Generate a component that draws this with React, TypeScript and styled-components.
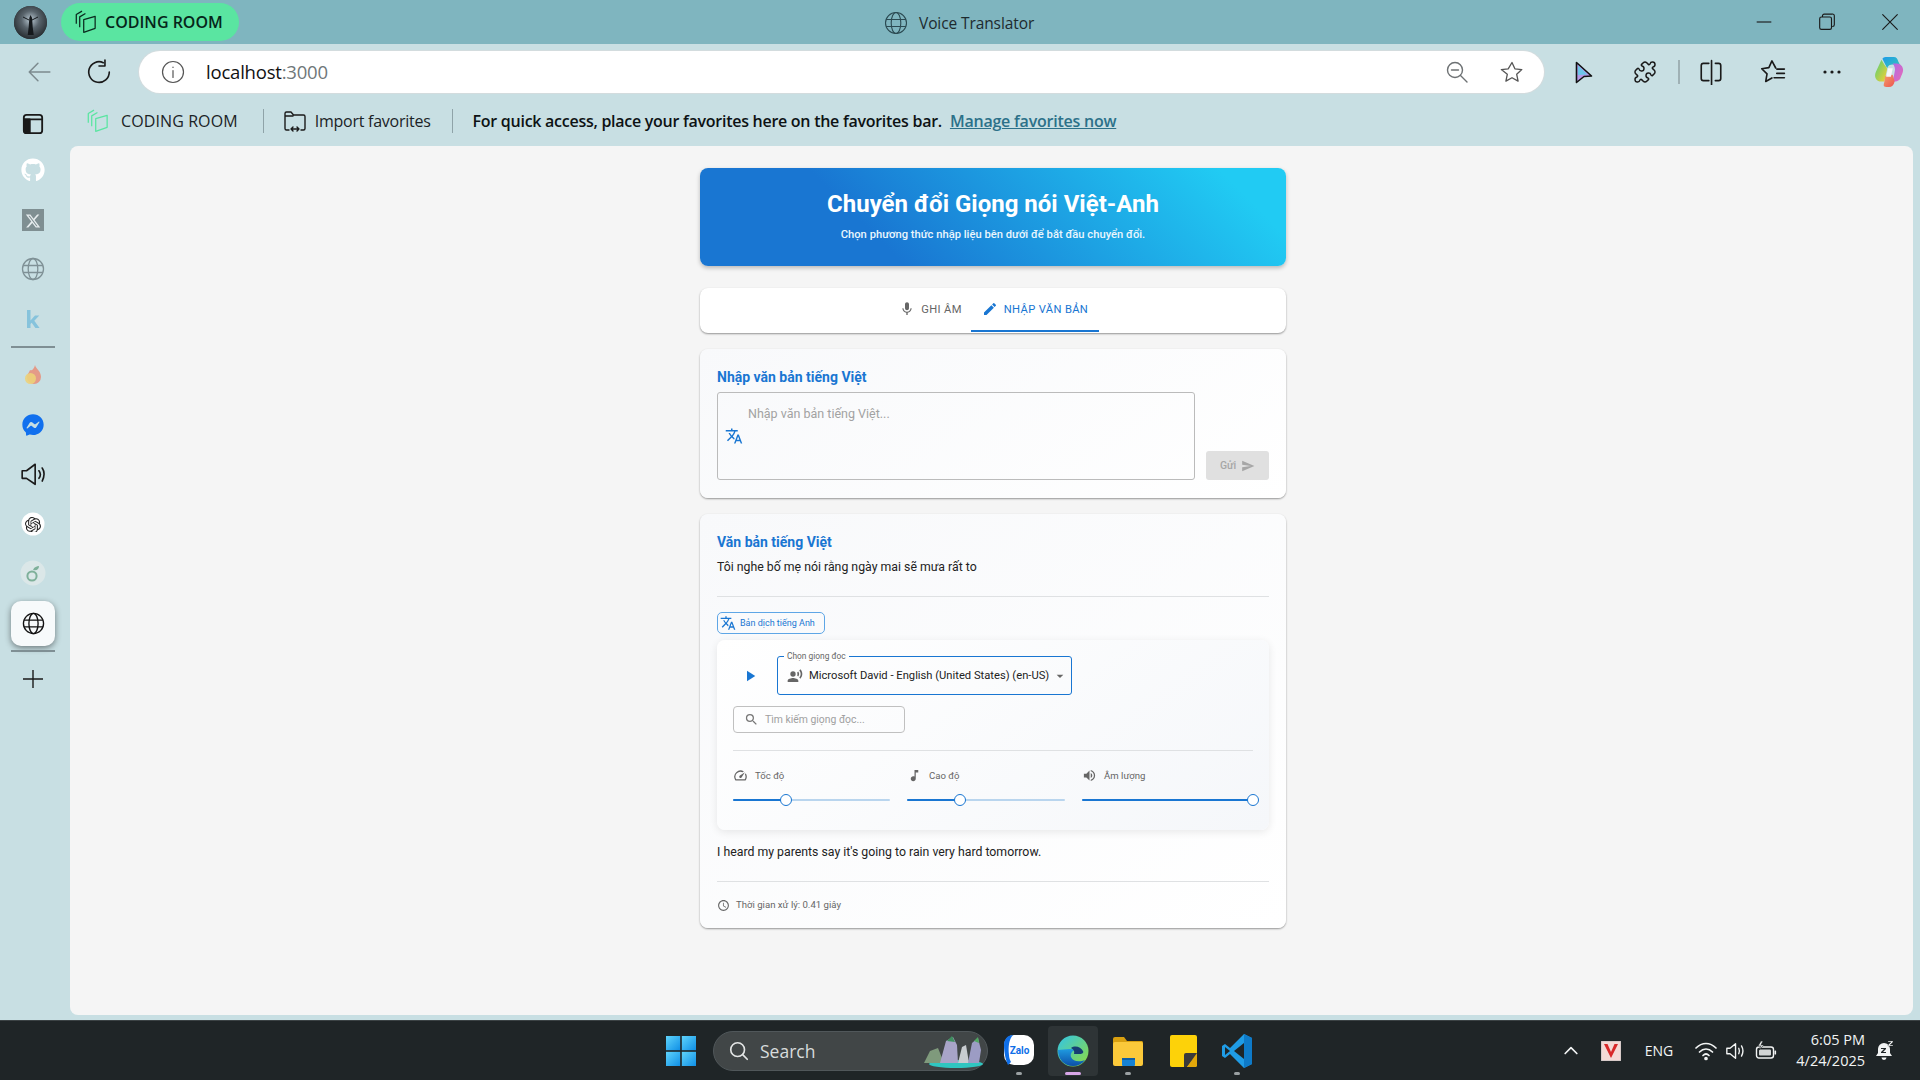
import React from "react";
import styled, { createGlobalStyle } from "styled-components";
import {
  MdMic, MdEdit, MdTranslate, MdSend, MdPlayArrow, MdRecordVoiceOver, MdSearch,
  MdOutlineSpeed, MdMusicNote, MdVolumeUp, MdAccessTime, MdArrowDropDown,
} from "react-icons/md";
import { FaGithub, FaFacebookMessenger } from "react-icons/fa";
import { SiOpenai } from "react-icons/si";
import { FaXTwitter } from "react-icons/fa6";
import { Puzzle } from "lucide-react";

const Global = createGlobalStyle`
  html, body { margin: 0; padding: 0; background: #c8dfe3; }
  * { box-sizing: border-box; }
  body { font-family: "Open Sans", "Noto Sans", sans-serif; }
`;

const Screen = styled.div`
  width: 1920px; height: 1080px; overflow: hidden;
  display: flex; flex-direction: column; background: #c8dfe3; color: #111;
`;

/* ---------- title bar ---------- */
const TitleBar = styled.div`
  height: 44px; background: #7fb5bf; display: flex; align-items: center;
  position: relative; padding-left: 14px;
`;
const Avatar = styled.div`
  width: 33px; height: 33px; border-radius: 50%; overflow: hidden; flex: none; background: #3a4146;
`;
const ProfilePill = styled.div`
  margin-left: 14px; width: 178px; height: 38px; border-radius: 19px; background: #5ae5a1;
  display: flex; align-items: center; gap: 7px; padding-left: 13px;
  font-size: 16px; font-weight: 600; color: #06261a;
`;
const WindowTitle = styled.div`
  position: absolute; left: 884px; top: 1px; height: 44px; display: flex; align-items: center; gap: 11px;
  font-size: 15.5px; color: #1d2a2e; letter-spacing: -0.1px;
`;
const WindowControls = styled.div`
  margin-left: auto; margin-right: -1px; display: flex; height: 44px;
`;
const WinSlot = styled.div`
  width: 63px; height: 44px; display: flex; align-items: center; justify-content: center;
`;

/* ---------- toolbar ---------- */
const Toolbar = styled.div`
  height: 56px; display: flex; align-items: center; padding-left: 9px;
`;
const ToolSlot = styled.div<{ $w: number }>`
  width: ${(p) => p.$w}px; height: 42px; flex: none; display: flex; align-items: center; justify-content: center;
`;
const AddressBar = styled.div`
  width: 1405px; margin: 0 10px; height: 42px; flex: none; background: #fff; border-radius: 21px;
  box-shadow: 0 0 0 1px #d3dcde; display: flex; align-items: center; padding: 0 20px 0 22px;
`;
const Url = styled.div`
  margin-left: 21px; margin-top: -2px; flex: 1; font-size: 18.5px; color: #111; letter-spacing: -0.2px;
  span { color: #6f7779; }
`;
const AddressAction = styled.div<{ $gap?: number }>`
  width: 24px; height: 24px; margin-left: ${(p) => p.$gap ?? 0}px; display: flex; align-items: center; justify-content: center;
`;
const ToolSep = styled.div`
  width: 2px; height: 24px; background: #9fb1b5; margin: 0 2px; flex: none;
`;

/* ---------- body ---------- */
const Body = styled.div`
  height: 920px; display: flex;
`;
const Sidebar = styled.div`
  width: 70px; flex: none; padding-top: 2px; padding-right: 4px; display: flex; flex-direction: column; align-items: center;
`;
const SideItem = styled.div<{ $h?: number; $mb?: number; $active?: boolean }>`
  width: 44px; height: ${(p) => p.$h ?? 50}px; margin-bottom: ${(p) => p.$mb ?? 0}px; flex: none;
  display: flex; align-items: center; justify-content: center;
  ${(p) => p.$active ? `background: #f7fafb; border-radius: 10px; box-shadow: 0 2px 6px rgba(0,0,0,.45);` : ""}
`;
const SideSep = styled.div<{ $mt: number; $mb: number }>`
  width: 44px; height: 2px; background: #7f8f94; flex: none;
  margin: ${(p) => p.$mt}px 0 ${(p) => p.$mb}px;
`;
const RightCol = styled.div`
  flex: 1; display: flex; flex-direction: column; min-width: 0; padding-right: 7px; padding-bottom: 5px;
`;
const FavBar = styled.div`
  height: 46px; flex: none; display: flex; align-items: center; font-size: 16px; color: #1b2326; padding-bottom: 4px;
`;
const FavItem = styled.div<{ $ml: number; $gap: number; $ls: number }>`
  display: flex; align-items: center; margin-left: ${(p) => p.$ml}px; gap: ${(p) => p.$gap}px; letter-spacing: ${(p) => p.$ls}px;
`;
const FavSep = styled.div<{ $ml: number }>`
  width: 1px; height: 24px; background: #8fa3a8; margin-left: ${(p) => p.$ml}px;
`;
const FavHint = styled.div`
  margin-left: 20px; font-weight: 600; color: #0d1214; letter-spacing: -0.27px;
`;
const FavLink = styled.a`
  margin-left: 8px; color: #2c7189; text-decoration: underline; font-weight: 600; letter-spacing: -0.23px;
`;
const Content = styled.div`
  flex: 1; background: #f5f5f5; border-radius: 8px; padding: 22px 0 0 3px;
  font-family: Roboto, "Noto Sans", sans-serif; display: flex; flex-direction: column; align-items: center;
`;
const Column = styled.div`
  width: 586px; display: flex; flex-direction: column;
`;

/* ---------- app ---------- */
const Hero = styled.div`
  height: 98px; border-radius: 8px; background: linear-gradient(45deg, #1976d2 30%, #21cbf3 90%);
  box-shadow: 0 2px 4px rgba(0,0,0,.25); color: #fff; text-align: center; padding-top: 21px;
`;
const HeroTitle = styled.div`
  font-size: 24px; line-height: 30px; font-weight: 700;
`;
const HeroSub = styled.div`
  margin-top: 8px; font-size: 11.2px; line-height: 15px; font-weight: 500; color: #eaf6fd;
`;
const TabsBar = styled.div`
  margin-top: 22px; height: 45px; background: #fff; border-radius: 8px; display: flex; justify-content: center;
  box-shadow: 0 1px 2px rgba(0,0,0,.4); padding-left: 3px;
`;
const Tab = styled.div<{ $w: number; $active?: boolean }>`
  width: ${(p) => p.$w}px; height: 44px; display: flex; align-items: center; justify-content: center; gap: 6px;
  font-size: 11.2px; font-weight: 400; letter-spacing: .35px; color: ${(p) => (p.$active ? "#1976d2" : "#666")};
  border-bottom: 2px solid ${(p) => (p.$active ? "#1976d2" : "transparent")};
  svg { color: ${(p) => (p.$active ? "#1976d2" : "#666")}; }
`;
const Card = styled.div<{ $mt: number; $h: number }>`
  margin-top: ${(p) => p.$mt}px; height: ${(p) => p.$h}px; border-radius: 8px; padding: 18px 17px 17px;
  background: linear-gradient(145deg, #f8f9fb, #ffffff); box-shadow: 0 1px 2px rgba(0,0,0,.4);
`;
const CardTitle = styled.div`
  font-size: 14px; line-height: 20px; font-weight: 700; color: #1976d2;
`;
const InputRow = styled.div`
  margin-top: 5px; display: flex; align-items: flex-end; gap: 11px;
`;
const TextArea = styled.div`
  width: 478px; height: 88px; border: 1px solid #bbb; border-radius: 3px; position: relative;
  display: flex; align-items: center; padding-left: 7px;
  color: #1976d2;
`;
const Placeholder = styled.div`
  position: absolute; left: 30px; top: 13px; font-size: 12.5px; line-height: 16px; color: #a2a2a2;
`;
const SendButton = styled.div`
  width: 63px; height: 29px; border-radius: 3px; background: #e0e0e0; color: #a6a6a6; font-size: 10.4px; font-weight: 500;
  display: flex; align-items: center; justify-content: center; gap: 5px;
`;
const BodyText = styled.div`
  font-size: 12.3px; line-height: 16px; color: #222;
`;
const SourceText = styled(BodyText)`
  margin-top: 7px;
`;
const Rule = styled.div<{ $mt: number }>`
  height: 1px; background: #dfe1e3; margin-top: ${(p) => p.$mt}px;
`;
const Chip = styled.div`
  margin-top: 15px; width: 108px; height: 22px; border: 1px solid #5ea6e6; border-radius: 5px; color: #1976d2;
  display: flex; align-items: center; gap: 4px; padding-left: 2px; font-size: 9px; line-height: 12px;
`;
const Player = styled.div`
  margin-top: 6px; height: 190px; border-radius: 8px; padding: 16px;
  background: linear-gradient(145deg, #ffffff, #f5f7fa); box-shadow: 0 2px 8px rgba(0,0,0,.09);
`;
const PlayerRow = styled.div`
  display: flex; align-items: center; height: 39px; color: #1976d2;
`;
const PlayBox = styled.div`
  width: 44px; padding-right: 11px; display: flex; justify-content: center;
`;
const SelectBox = styled.div`
  width: 295px; height: 39px; border: 1px solid #1976d2; border-radius: 3px; position: relative;
  display: flex; align-items: center; padding-left: 9px; gap: 6px; color: #222; font-size: 11.2px; white-space: nowrap;
  svg { color: #666; flex: none; }
`;
const SelectLegend = styled.div`
  position: absolute; left: 6px; top: -6px; padding: 0 3px; background: #fefefe; font-size: 8.4px; line-height: 11px; color: #666;
`;
const SelectArrow = styled.div`
  margin-left: -3px; display: flex;
`;
const SearchBox = styled.div`
  margin-top: 11px; width: 172px; height: 27px; border: 1px solid #c0c0c0; border-radius: 4px;
  display: flex; align-items: center; gap: 6px; padding-left: 10px; font-size: 10.4px; color: #a0a0a0;
  svg { color: #777; }
`;
const SliderGrid = styled.div`
  margin-top: 16px; display: grid; grid-template-columns: 157px 158px 171px; column-gap: 17px;
`;
const SliderLabel = styled.div`
  height: 16px; display: flex; align-items: center; gap: 7px; font-size: 9.6px; color: #666;
  svg { color: #666; flex: none; }
`;
const Track = styled.div`
  margin-top: 16px; height: 2px; background: #b9d5ee; border-radius: 1px; position: relative;
`;
const TrackFill = styled.div`
  position: absolute; left: 0; top: 0; height: 2px; background: #1976d2; border-radius: 1px;
`;
const Thumb = styled.div`
  position: absolute; top: -5px; width: 12px; height: 12px; margin-left: -6px; border-radius: 50%;
  background: #fff; border: 1.5px solid #1976d2;
`;
const TranslatedText = styled(BodyText)`
  margin-top: 14px;
`;
const TimeRow = styled.div`
  margin-top: 16px; display: flex; align-items: center; gap: 6px; font-size: 9.6px; line-height: 14px; color: #666;
`;

/* ---------- taskbar ---------- */
const Taskbar = styled.div`
  height: 60px; flex: none; background: #1f2527; border-top: 1px solid #3b4244; display: flex; align-items: center;
  padding-left: 664px; color: #f2f4f4;
`;
const StartSlot = styled.div`
  width: 34px; display: flex; justify-content: center; margin-right: 15px;
`;
const SearchPill = styled.div`
  width: 275px; height: 40px; border-radius: 20px; background: #414647; border: 1px solid #50575a;
  display: flex; align-items: center; padding-left: 14px; gap: 10px; font-size: 17.5px; color: #d8dcdc; position: relative;
`;
const SearchArt = styled.div`
  position: absolute; right: 3px; top: 3px; display: flex;
`;
const TaskApp = styled.div<{ $w: number; $ml: number; $active?: boolean }>`
  width: ${(p) => p.$w}px; margin-left: ${(p) => p.$ml}px; height: 50px; flex: none; display: flex; align-items: center; justify-content: center; position: relative;
  border-radius: 4px; ${(p) => (p.$active ? "background:#2e3436;" : "")}
`;
const RunDot = styled.div<{ $active?: boolean }>`
  position: absolute; bottom: 1px; left: 50%; height: 3px; border-radius: 2px;
  width: ${(p) => (p.$active ? 16 : 6)}px; margin-left: ${(p) => (p.$active ? -8 : -3)}px;
  background: ${(p) => (p.$active ? "#d8a6e8" : "#9aa0a2")};
`;
const Tray = styled.div`
  margin-left: 286px; display: flex; align-items: center; height: 100%;
`;
const TrayItem = styled.div<{ $w: number }>`
  width: ${(p) => p.$w}px; display: flex; justify-content: center; align-items: center; flex: none; font-size: 14px;
`;
const Clock = styled.div`
  width: 80px; text-align: right; font-size: 14.5px; line-height: 20.5px; color: #f2f4f4;
`;

/* ---------- drawn icons ---------- */
const CodingIcon = ({ c, s = 24 }: { c: string; s?: number }) => (
  <svg width={s} height={s} viewBox="3 2 19 21" fill="none" stroke={c} strokeWidth="1.1" strokeLinejoin="round">
    <path d="M4 14V6l5-3" /><path d="M7 17V8l5-3" /><path d="M10.5 21.5V10.5L20.5 7.5v10.5z" />
  </svg>
);
const Globe = ({ s = 24, c = "#1a1a1a", w = 1.4 }: { s?: number; c?: string; w?: number }) => (
  <svg width={s} height={s} viewBox="0 0 24 24" fill="none" stroke={c} strokeWidth={w}>
    <circle cx="12" cy="12" r="10.5" /><ellipse cx="12" cy="12" rx="4.8" ry="10.5" /><path d="M2 8.5h20M2 15.5h20" />
  </svg>
);
const Ico = ({ s = 24, children, vb = "0 0 24 24", c = "#1a1a1a", w = 1.5 }: { s?: number; children: React.ReactNode; vb?: string; c?: string; w?: number }) => (
  <svg width={s} height={s} viewBox={vb} fill="none" stroke={c} strokeWidth={w} strokeLinecap="round" strokeLinejoin="round">{children}</svg>
);

export default function App() {
  return (
    <Screen>
      <Global />
      <TitleBar>
        <Avatar>
          <svg width="33" height="33" viewBox="0 0 33 33">
            <defs><radialGradient id="av" cx="50%" cy="42%" r="60%"><stop offset="0" stopColor="#b9c8d2" /><stop offset=".45" stopColor="#59646c" /><stop offset="1" stopColor="#23292d" /></radialGradient></defs>
            <rect width="33" height="33" fill="url(#av)" />
            <path d="M16.5 9l1.6 3 .6 9 1 8h-6l1-8 .6-9z" fill="#15191c" />
            <path d="M15 14L9 11M18 14l6-3" stroke="#15191c" strokeWidth="1" />
          </svg>
        </Avatar>
        <ProfilePill><CodingIcon c="#0b2b1f" />CODING ROOM</ProfilePill>
        <WindowTitle><Globe s={24} c="#2b4a52" w={1.1} />Voice Translator</WindowTitle>
        <WindowControls>
          <WinSlot><Ico s={18} vb="0 0 16 16" w={1}><path d="M1.5 8h13" strokeLinecap="butt" /></Ico></WinSlot>
          <WinSlot><Ico s={18} vb="0 0 16 16" w={1}><rect x="1.5" y="3.5" width="10.5" height="11" rx="1.5" /><path d="M4 3V2.5A1.5 1.5 0 0 1 5.5 1h7A1.5 1.5 0 0 1 14.5 2.5v8a1.5 1.5 0 0 1-1.5 1.5" /></Ico></WinSlot>
          <WinSlot><Ico s={18} vb="0 0 16 16" w={1}><path d="M1.5 1.5l13 13M14.5 1.5l-13 13" /></Ico></WinSlot>
        </WindowControls>
      </TitleBar>

      <Toolbar>
        <ToolSlot $w={60}><Ico s={26} c="#7c8a8e" w={1.4}><path d="M22 12H3M11 4l-8 8 8 8" /></Ico></ToolSlot>
        <ToolSlot $w={60}><Ico s={26} w={1.5}><path d="M21.5 12A9.5 9.5 0 1 1 16 3.4" /><path d="M16.5 1v5.5H11" transform="translate(1 0)" /></Ico></ToolSlot>
        <AddressBar>
          <Ico s={24} c="#555" w={1.2}><circle cx="12" cy="12" r="10.5" /><path d="M12 10.5v7M12 7v.4" /></Ico>
          <Url>localhost<span>:3000</span></Url>
          <AddressAction><Ico s={24} c="#6d7173" w={1.4}><circle cx="10" cy="10" r="7.5" /><path d="M6.5 10h7M15.5 15.5l6.5 6.5" /></Ico></AddressAction>
          <AddressAction $gap={31}><Ico s={26} c="#555" w={1.3}><path d="M12 2.5l2.9 6.3 6.9.8-5.1 4.7 1.4 6.8-6.1-3.4-6.1 3.4 1.4-6.8L1.3 9.6l6.9-.8z" /></Ico></AddressAction>
        </AddressBar>
        <ToolSlot $w={60}>
          <svg width="18" height="23" viewBox="0 0 18 23">
            <path d="M1.5 1.5L16.5 15l-7.5.5-7.5 6z" fill="#b79ae8" stroke="#111" strokeWidth="1.6" strokeLinejoin="round" />
            <path d="M3 4.5l9.5 9-9.5.6z" fill="#6cc6ea" />
          </svg>
        </ToolSlot>
        <ToolSlot $w={62}><Puzzle size={24} strokeWidth={1.5} color="#1a1a1a" /></ToolSlot>
        <ToolSep />
        <ToolSlot $w={58}><Ico s={26} w={1.5}><path d="M10 4H5a2 2 0 0 0-2 2v12a2 2 0 0 0 2 2h5M16 4h3a2 2 0 0 1 2 2v12a2 2 0 0 1-2 2h-3M12.5 1.5v23" /></Ico></ToolSlot>
        <ToolSlot $w={66}><Ico s={26} w={1.5}><path d="M14.5 8.3L11 1.8 8.2 8l-6.6 1 4.9 4.7-1.2 7 5.7-3.2" /><path d="M15.5 9.3h7M15.5 13.3h7M13 17.3h9.5" /></Ico></ToolSlot>
        <ToolSlot $w={52}><svg width="20" height="6" viewBox="0 0 20 6" fill="#1a1a1a"><circle cx="3" cy="3" r="1.6" /><circle cx="10" cy="3" r="1.6" /><circle cx="17" cy="3" r="1.6" /></svg></ToolSlot>
        <ToolSlot $w={62}>
          <svg width="32" height="32" viewBox="0 0 32 34">
            <defs>
              <linearGradient id="cp1" x1="0" y1="0" x2="1" y2="1"><stop offset="0" stopColor="#1c9be8" /><stop offset="1" stopColor="#38c6b8" /></linearGradient>
              <linearGradient id="cp2" x1="0" y1="0" x2="1" y2="1"><stop offset="0" stopColor="#4fcf7a" /><stop offset="1" stopColor="#f8d030" /></linearGradient>
              <linearGradient id="cp3" x1="0" y1="0" x2="1" y2="1"><stop offset="0" stopColor="#b06ae8" /><stop offset="1" stopColor="#e86ab4" /></linearGradient>
              <linearGradient id="cp4" x1="0" y1="0" x2="1" y2="1"><stop offset="0" stopColor="#f2a06a" /><stop offset="1" stopColor="#ef5350" /></linearGradient>
            </defs>
            <path d="M9 3c1-2 3-2 5-2h7c3 0 4 2 5 5l2 4-8-1c-3 0-5 1-6 4z" fill="url(#cp1)" />
            <path d="M8 4L2 17c-2 5 0 9 4 10h5l3-13c0-2-2-3-3-5z" fill="url(#cp2)" />
            <path d="M20 8h4c4 0 7 3 7 7 0 3-2 6-3 9-1 2-3 3-5 3h-3l2-10c1-3 0-6-2-9z" fill="url(#cp3)" />
            <path d="M12 21l8-1 2 7c-1 4-3 6-6 6h-3c-3 0-3-2-2-5z" fill="url(#cp4)" />
            <path d="M15 13h5l-2 9h-5z" fill="#f5f7fa" />
          </svg>
        </ToolSlot>
      </Toolbar>

      <Body>
        <Sidebar>
          <SideItem $h={43}><Ico s={22} w={2}><rect x="2" y="2" width="20" height="20" rx="3" /><path d="M2 7h20" /><path d="M2.5 7h6v14.5h-4a2 2 0 0 1-2-2z" fill="#1a1a1a" /></Ico></SideItem>
          <SideItem><FaGithub size={24} color="#fff" /></SideItem>
          <SideItem $h={49}><svg width="22" height="22" viewBox="0 0 22 22"><rect width="22" height="22" fill="#7f8f92" /><foreignObject x="3" y="3" width="16" height="16"><FaXTwitter size={16} color="#e6ecee" /></foreignObject></svg></SideItem>
          <SideItem $h={50}><Globe s={24} c="#7f9196" w={1.3} /></SideItem>
          <SideItem><svg width="18" height="20" viewBox="0 0 18 20" fill="#86c3dc"><path d="M3 1h3.5v10.5L11 6.5h4.3l-5 5.2 5.3 7.3h-4.2l-3.7-5.2-1.2 1.2V19H3z" /></svg></SideItem>
          <SideSep $mt={2} $mb={2} />
          <SideItem><svg width="18" height="22" viewBox="0 0 18 22"><path d="M11 1c1 4 6 6 6 12a7 7 0 0 1-14 0c0-3 2-4 3-7 2 1 4-1 5-5z" fill="#e49a88" /><circle cx="6.5" cy="14.5" r="5.5" fill="#ecd27a" opacity=".9" /></svg></SideItem>
          <SideItem $h={49}><FaFacebookMessenger size={22} color="#1170ee" /></SideItem>
          <SideItem $h={50}><Ico s={26} w={1.5}><path d="M2 9v7h4l8 5.5V3L6 9z" /><path d="M17.5 9c1.5 2 1.5 5 0 7M20.5 6.5c2 3 2 8 0 12" /></Ico></SideItem>
          <SideItem $h={49}><svg width="24" height="24" viewBox="0 0 24 24"><circle cx="12" cy="12" r="11.5" fill="#fff" /><foreignObject x="4" y="4" width="16" height="16"><SiOpenai size={16} color="#222" /></foreignObject></svg></SideItem>
          <SideItem $h={50} $mb={3}><svg width="26" height="26" viewBox="0 0 26 26" fill="none"><circle cx="13" cy="13" r="12.5" fill="#dbe7e8" /><circle cx="12" cy="16" r="4.6" stroke="#7fb09a" strokeWidth="2" /><path d="M13 10c1-3 4-4 6-4 0 3-2 5-6 4z" fill="#7fb09a" /></svg></SideItem>
          <SideItem $h={45} $active><Globe s={23} c="#111" w={1.4} /></SideItem>
          <SideSep $mt={4} $mb={2} />
          <SideItem><Ico s={24} w={1.4}><path d="M12 3v18M2 12h20" strokeLinecap="butt" /></Ico></SideItem>
        </Sidebar>
        <RightCol>
          <FavBar>
            <FavItem $ml={16} $gap={11} $ls={0.1}><CodingIcon c="#5ae5a1" />CODING ROOM</FavItem>
            <FavSep $ml={25} />
            <FavItem $ml={19} $gap={8} $ls={-0.25}>
              <Ico s={24} w={1.4}><path d="M6 21H3.5A1.5 1.5 0 0 1 2 19.5v-15A1.5 1.5 0 0 1 3.5 3h4.5l2.5 3h10a1.5 1.5 0 0 1 1.5 1.5v12a1.5 1.5 0 0 1-1.5 1.5H18M2 7h8M8 20h8M10 18l-2 2 2 2M14 18l2 2-2 2" /></Ico>
              Import favorites
            </FavItem>
            <FavSep $ml={21} />
            <FavHint>For quick access, place your favorites here on the favorites bar.</FavHint>
            <FavLink>Manage favorites now</FavLink>
          </FavBar>
          <Content>
            <Column>
              <Hero>
                <HeroTitle>Chuyển đổi Giọng nói Việt-Anh</HeroTitle>
                <HeroSub>Chọn phương thức nhập liệu bên dưới để bắt đầu chuyển đổi.</HeroSub>
              </Hero>
              <TabsBar>
                <Tab $w={81}><MdMic size={16} />GHI ÂM</Tab>
                <Tab $w={128} $active><MdEdit size={16} />NHẬP VĂN BẢN</Tab>
              </TabsBar>
              <Card $mt={16} $h={149}>
                <CardTitle>Nhập văn bản tiếng Việt</CardTitle>
                <InputRow>
                  <TextArea>
                    <MdTranslate size={18} />
                    <Placeholder>Nhập văn bản tiếng Việt...</Placeholder>
                  </TextArea>
                  <SendButton>Gửi <MdSend size={14} /></SendButton>
                </InputRow>
              </Card>
              <Card $mt={16} $h={414}>
                <CardTitle>Văn bản tiếng Việt</CardTitle>
                <SourceText>Tôi nghe bố mẹ nói rằng ngày mai sẽ mưa rất to</SourceText>
                <Rule $mt={21} />
                <Chip><MdTranslate size={16} />Bản dịch tiếng Anh</Chip>
                <Player>
                  <PlayerRow>
                    <PlayBox><MdPlayArrow size={18} /></PlayBox>
                    <SelectBox>
                      <SelectLegend>Chọn giọng đọc</SelectLegend>
                      <MdRecordVoiceOver size={16} />
                      Microsoft David - English (United States) (en-US)
                      <SelectArrow><MdArrowDropDown size={16} /></SelectArrow>
                    </SelectBox>
                  </PlayerRow>
                  <SearchBox><MdSearch size={15} />Tìm kiếm giọng đọc...</SearchBox>
                  <Rule $mt={17} />
                  <SliderGrid>
                    <div>
                      <SliderLabel><MdOutlineSpeed size={15} />Tốc độ</SliderLabel>
                      <Track><TrackFill style={{ width: "33.5%" }} /><Thumb style={{ left: "33.5%" }} /></Track>
                    </div>
                    <div>
                      <SliderLabel><MdMusicNote size={15} />Cao độ</SliderLabel>
                      <Track><TrackFill style={{ width: "33.5%" }} /><Thumb style={{ left: "33.5%" }} /></Track>
                    </div>
                    <div>
                      <SliderLabel><MdVolumeUp size={15} />Âm lượng</SliderLabel>
                      <Track><TrackFill style={{ width: "100%" }} /><Thumb style={{ left: "100%" }} /></Track>
                    </div>
                  </SliderGrid>
                </Player>
                <TranslatedText>I heard my parents say it's going to rain very hard tomorrow.</TranslatedText>
                <Rule $mt={21} />
                <TimeRow><MdAccessTime size={13} />Thời gian xử lý: 0.41 giây</TimeRow>
              </Card>
            </Column>
          </Content>
        </RightCol>
      </Body>

      <Taskbar>
        <StartSlot>
          <svg width="30" height="30" viewBox="0 0 30 30">
            <defs><linearGradient id="win" x1="0" y1="0" x2="1" y2="1"><stop offset="0" stopColor="#5fd4fb" /><stop offset="1" stopColor="#0f8fe6" /></linearGradient></defs>
            <rect width="14.2" height="14.2" fill="url(#win)" /><rect x="15.8" width="14.2" height="14.2" fill="url(#win)" />
            <rect y="15.8" width="14.2" height="14.2" fill="url(#win)" /><rect x="15.8" y="15.8" width="14.2" height="14.2" fill="url(#win)" />
          </svg>
        </StartSlot>
        <SearchPill>
          <Ico s={22} c="#e4e6e6" w={1.8}><circle cx="10.5" cy="10.5" r="7.5" /><path d="M16 16l5 5" /></Ico>
          Search
          <SearchArt>
            <svg width="62" height="34" viewBox="0 0 62 34">
              <ellipse cx="34" cy="29" rx="27" ry="4" fill="#2fc6c0" />
              <path d="M2 28l6-12 8-3 6 15z" fill="#7f9a7c" />
              <path d="M18 28L24 6l7-4 4 8 1 18z" fill="#a8a4c8" />
              <path d="M25 6l5-5 3 6z" fill="#3f8f5f" />
              <path d="M36 28l4-16 4-2 3 18z" fill="#c8ccd0" />
              <path d="M46 28l4-20 6-5 3 12-2 13z" fill="#9c9cc4" />
              <path d="M52 6l4-4 1 6z" fill="#4fa860" />
            </svg>
          </SearchArt>
        </SearchPill>
        <TaskApp $w={50} $ml={6}>
          <svg width="32" height="34" viewBox="0 0 32 34"><rect x="1" y="1" width="30" height="30" rx="10" fill="#fff" /><path d="M1 11C1 5 5 1 10 1c-4 4-5 12-4 20 0 3 1 5 2 7l-3 3c-2-4-4-12-4-20z" fill="#0f6fe8" /><text x="16.5" y="20" textAnchor="middle" fontFamily="Roboto" fontSize="10" fontWeight="700" fill="#0f6fe8">Zalo</text></svg>
          <RunDot />
        </TaskApp>
        <TaskApp $w={50} $ml={4} $active>
          <svg width="32" height="32" viewBox="0 0 32 32">
            <defs>
              <linearGradient id="eg1" x1="0" y1="0" x2="1" y2="1"><stop offset="0" stopColor="#31c4e8" /><stop offset="1" stopColor="#8fdc3e" /></linearGradient>
              <linearGradient id="eg2" x1="0" y1="0" x2="0" y2="1"><stop offset="0" stopColor="#1f9be0" /><stop offset="1" stopColor="#0c4fa8" /></linearGradient>
            </defs>
            <circle cx="16" cy="16" r="15.5" fill="url(#eg1)" />
            <path d="M1 15c0 9 6 16 15 16 5 0 9-2 12-6-5 2-12 2-14-3-1-3 1-6 4-7-5-2-12 0-17 0z" fill="url(#eg2)" />
            <path d="M14 13c4-3 10-1 12 3 1 2-1 3-3 3h-6c1-3-1-5-3-6z" fill="#163e74" />
          </svg>
          <RunDot $active />
        </TaskApp>
        <TaskApp $w={58} $ml={1}>
          <svg width="32" height="30" viewBox="0 0 32 30"><path d="M1 3a2 2 0 0 1 2-2h9l3 4h15a2 2 0 0 1 1 2v3H1z" fill="#d9a010" /><rect x="1" y="6" width="30" height="24" rx="2" fill="#fbc93a" /><rect x="10" y="22" width="13" height="8" rx="1" fill="#1682d4" /><rect x="10" y="22" width="13" height="2" fill="#0e5fa5" /></svg>
          <RunDot />
        </TaskApp>
        <TaskApp $w={52} $ml={0}>
          <svg width="27" height="32" viewBox="0 0 27 32"><rect width="27" height="32" rx="2" fill="#fdd209" /><path d="M14 32V20a2 2 0 0 1 2-2h11v2L17 32z" fill="#3a3a3a" /><path d="M27 18L17 32h8a2 2 0 0 0 2-2z" fill="#e2a70a" /></svg>
        </TaskApp>
        <TaskApp $w={56} $ml={0}>
          <svg width="32" height="36" viewBox="0 0 32 36"><path d="M23 1l8 4v26l-8 4-14-14-5 4-3-2v-10l3-2 5 4z" fill="#1f9ce6" /><path d="M23 10v16l-10-8z" fill="#1f2527" /><path d="M4 14l5 4-5 4z" fill="#1f2527" /><path d="M23 1l8 4v26l-8 4z" fill="#0e7ac8" /></svg>
          <RunDot />
        </TaskApp>
        <Tray>
          <TrayItem $w={40}><Ico s={20} c="#f2f4f4" w={2}><path d="M5 15l7-7 7 7" /></Ico></TrayItem>
          <TrayItem $w={40}><svg width="20" height="20" viewBox="0 0 20 20"><rect width="20" height="20" fill="#f4d9d6" stroke="#bbb" /><path d="M3 3l7 14 7-14h-3.5l-3.5 8-3.5-8z" fill="#d8282a" /></svg></TrayItem>
          <TrayItem $w={56}>ENG</TrayItem>
          <TrayItem $w={38}><svg width="24" height="20" viewBox="0 0 24 20" fill="none" stroke="#f2f4f4" strokeWidth="1.7" strokeLinecap="round"><path d="M2 7c6-6 14-6 20 0M5.5 11c4-4 9-4 13 0M9 14.5c2-2 4-2 6 0" /><circle cx="12" cy="17.5" r="1" fill="#f2f4f4" /></svg></TrayItem>
          <TrayItem $w={22}><Ico s={22} c="#f2f4f4" w={1.5}><path d="M2 9v6h3.5l6 5V4l-6 5z" /><path d="M15 9c1 2 1 4 0 6M18 6.5c2 3.5 2 7.5 0 11" /></Ico></TrayItem>
          <TrayItem $w={38}>
            <svg width="22" height="20" viewBox="0 0 22 20">
              <rect x="1.5" y="6" width="17" height="11" rx="2.5" fill="none" stroke="#f2f4f4" strokeWidth="1.4" />
              <rect x="4" y="8.5" width="12" height="6" rx="1" fill="#f2f4f4" opacity=".85" />
              <rect x="19.5" y="9.5" width="1.6" height="4" rx=".6" fill="#f2f4f4" />
              <path d="M6 0L3 5h3L4 9l5-5H6l2-4z" fill="#f2f4f4" stroke="#1f2527" strokeWidth=".6" />
            </svg>
          </TrayItem>
          <Clock>6:05 PM<br />4/24/2025</Clock>
          <TrayItem $w={40}>
            <svg width="20" height="22" viewBox="0 0 20 22" fill="#f2f4f4">
              <path d="M9 3a6 6 0 0 0-6 6v4l-2 3h16l-2-3V9a6 6 0 0 0-6-6z" />
              <path d="M6.5 17.5a2.5 2.5 0 0 0 5 0z" />
              <path d="M13 1h5v1l-3 3h3v1h-5V5l3-3h-3z" stroke="#1f2527" strokeWidth=".3" />
              <path d="M6 8h5v1l-3 3h3v1H6v-1l3-3H6z" fill="#1f2527" />
            </svg>
          </TrayItem>
        </Tray>
      </Taskbar>
    </Screen>
  );
}
